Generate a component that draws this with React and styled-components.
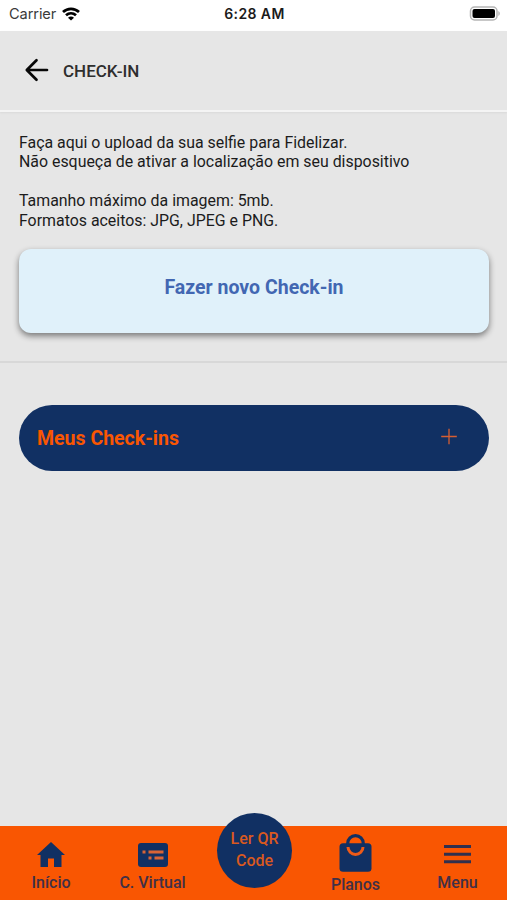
import React from "react";
import styled, { createGlobalStyle } from "styled-components";

const GlobalStyle = createGlobalStyle`
  * { box-sizing: border-box; }
  body { margin: 0; background: #e6e6e6; }
  button { border: 0; padding: 0; background: none; font: inherit; color: inherit; }
  svg { display: block; flex: none; }
`;

const navy = "#113063";
const orange = "#f95602";

const Screen = styled.div`
  display: flex;
  flex-direction: column;
  width: 100%;
  height: 900px;
  overflow: hidden;
  background: #e6e6e6;
  color: #1c1c1c;
  font-family: Roboto, "Liberation Sans", sans-serif;
`;

const StatusBar = styled.div`
  display: grid;
  grid-template-columns: 1fr auto 1fr;
  align-items: center;
  height: 31px;
  padding: 0 7px 4px 9px;
  background: #fff;
  font-family: Inter, "Liberation Sans", sans-serif;
  font-size: 14px;
  line-height: 18px;
`;

const Carrier = styled.div`
  display: flex;
  align-items: center;
  gap: 6px;
  color: #3a3a3a;
  font-size: 14.6px;
  letter-spacing: -0.1px;
`;

const Clock = styled.div`
  font-weight: 600;
  color: #1b1b1b;
  letter-spacing: 0.4px;
`;

const BatterySlot = styled.div`
  justify-self: end;
`;

const Header = styled.header`
  display: flex;
  align-items: center;
  gap: 14px;
  height: 81px;
  padding: 0 24px 1px;
  border-bottom: 2px solid #f4f4f4;
  box-shadow: 0 1px 2px rgba(0, 0, 0, 0.06);
`;

const Title = styled.h1`
  margin: 0;
  padding-top: 1px;
  font-size: 17px;
  line-height: 20px;
  font-weight: 500;
  color: #2e2e2e;
`;

const Upload = styled.section`
  height: 251px;
  padding: 20.5px 18px 0 19px;
  border-bottom: 2px solid #d8d8d8;
`;

const Note = styled.p`
  margin: 0 0 19.5px;
  font-size: 15.9px;
  line-height: 19.5px;
  white-space: nowrap;

  & + & {
    margin-bottom: 19px;
  }
`;

const CheckInButton = styled.button`
  display: flex;
  justify-content: center;
  width: 100%;
  height: 84px;
  padding-top: 27px;
  border-radius: 12px;
  background: #e0f1fa;
  box-shadow: 0 3px 6px rgba(0, 0, 0, 0.48);
  color: #4267b2;
  font-size: 19.5px;
  line-height: 24px;
  font-weight: 700;
`;

const History = styled.section`
  flex: 1;
  padding: 42px 18px 0 19px;
`;

const Accordion = styled.button`
  display: flex;
  align-items: center;
  justify-content: space-between;
  width: 100%;
  height: 66px;
  padding: 0 32px 0 18px;
  border-radius: 33px;
  background: ${navy};
  color: ${orange};
  font-size: 19.5px;
  line-height: 25px;
  font-weight: 700;
`;

const NavBar = styled.nav`
  display: grid;
  grid-template-columns: 102px 101px 103px 99px 1fr;
  height: 74px;
  background: ${orange};
`;

const NavItem = styled.button`
  display: flex;
  flex-direction: column;
  align-items: center;
  justify-content: flex-end;
  gap: ${(p) => p.$gap || 6}px;
  padding-bottom: ${(p) => p.$bottom || 7}px;
  color: #403047;
  font-size: 16px;
  line-height: 20px;
  font-weight: 500;

  &:last-child {
    padding-left: 3px;
  }
`;

const ScanButton = styled.button`
  justify-self: center;
  width: 75px;
  height: 75px;
  margin-top: -13px;
  padding-bottom: 1px;
  border-radius: 50%;
  background: ${navy};
  color: #d9591f;
  font-size: 16px;
  line-height: 22px;
  font-weight: 500;
`;

const WifiIcon = () => (
  <svg width="18" height="14" viewBox="0 0 18 14" fill="none" stroke="#000" strokeWidth="2.7">
    <path d="M1 5.1C5.5.8 12.5.8 17 5.1" />
    <path d="M4 8.3c2.9-2.7 7.1-2.7 10 0" />
    <path d="M9 13.6 6 10.7c1.7-1.5 4.3-1.5 6 0Z" fill="#000" stroke="none" />
  </svg>
);

const BatteryIcon = () => (
  <svg width="31" height="15" viewBox="0 0 31 15">
    <rect x="1.5" y="1" width="26.5" height="13" rx="4" fill="#fff" stroke="#b5b5b5" strokeWidth="1.5" />
    <rect x="3.5" y="3" width="22.5" height="9" rx="2" fill="#000" />
    <path d="M29.3 5c2 .8 2 4.2 0 5Z" fill="#b5b5b5" />
  </svg>
);

const BackIcon = () => (
  <svg width="25" height="24" viewBox="0 0 25 24" fill="none" stroke="#080808" strokeWidth="2.7" strokeLinecap="round" strokeLinejoin="round">
    <path d="M23 12H3M12.5 2.2 2.8 12l9.7 9.8" />
  </svg>
);

const PlusIcon = () => (
  <svg width="16" height="20" viewBox="0 0 16 20" fill="none" stroke="#d65e32" strokeWidth="1.3">
    <path d="M.2 8.5h15.6M8 .7v15.6" />
  </svg>
);

const HomeIcon = () => (
  <svg width="28" height="25" viewBox="0 0 28 25" fill={navy}>
    <path d="M14 0 28 13h-3.5v12H17v-8.5h-6V25H3.5V13H0Z" />
  </svg>
);

const CardIcon = () => (
  <svg width="30" height="24" viewBox="0 0 30 24">
    <rect width="30" height="24" rx="3" fill={navy} />
    <path d="M4.5 7.6h3v3h-3zM10.5 7.6h15v3h-15zM10.5 13.4h3v3h-3zM16.5 13.4h9v3h-9z" fill="#d96436" />
  </svg>
);

const BagIcon = () => (
  <svg width="33" height="38" viewBox="0 0 33 38" fill="none">
    <rect x="0.5" y="9.3" width="32" height="28.4" rx="3.5" fill={navy} />
    <path d="M8.7 11V9.5a7.8 7.8 0 0 1 15.6 0V11" stroke={navy} strokeWidth="3.2" />
    <path d="M9 13a7.5 7.5 0 0 0 15 0" stroke="#ee5a18" strokeWidth="3" />
  </svg>
);

const MenuIcon = () => (
  <svg width="27" height="19" viewBox="0 0 27 19" fill="#30304f">
    <path d="M0 0h27v3H0zM0 7.7h27v3H0zM0 15.3h27v3H0z" />
  </svg>
);

export default function App() {
  return (
    <>
      <GlobalStyle />
      <Screen>
        <StatusBar>
          <Carrier>
            Carrier
            <WifiIcon />
          </Carrier>
          <Clock>6:28 AM</Clock>
          <BatterySlot>
            <BatteryIcon />
          </BatterySlot>
        </StatusBar>
        <Header>
          <BackIcon />
          <Title>CHECK-IN</Title>
        </Header>
        <Upload>
          <Note>
            Faça aqui o upload da sua selfie para Fidelizar.
            <br />
            Não esqueça de ativar a localização em seu dispositivo
          </Note>
          <Note>
            Tamanho máximo da imagem: 5mb.
            <br />
            Formatos aceitos: JPG, JPEG e PNG.
          </Note>
          <CheckInButton>Fazer novo Check-in</CheckInButton>
        </Upload>
        <History>
          <Accordion>
            Meus Check-ins
            <PlusIcon />
          </Accordion>
        </History>
        <NavBar>
          <NavItem>
            <HomeIcon />
            Início
          </NavItem>
          <NavItem>
            <CardIcon />
            C. Virtual
          </NavItem>
          <ScanButton>
            Ler QR
            <br />
            Code
          </ScanButton>
          <NavItem $gap={3} $bottom={5}>
            <BagIcon />
            Planos
          </NavItem>
          <NavItem $gap={9}>
            <MenuIcon />
            Menu
          </NavItem>
        </NavBar>
      </Screen>
    </>
  );
}
